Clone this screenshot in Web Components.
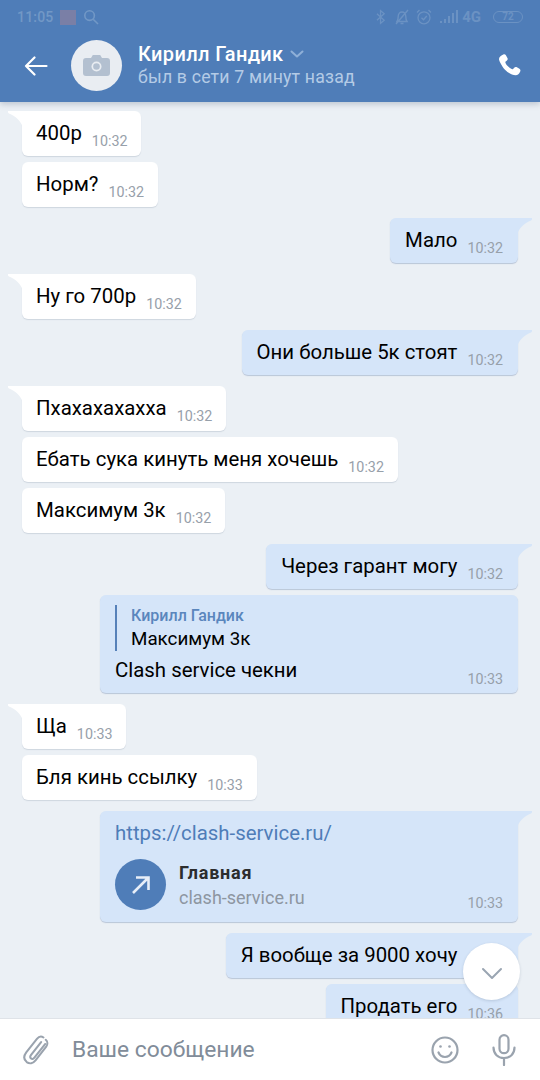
<!DOCTYPE html>
<html lang="ru">
<head>
<meta charset="utf-8">
<title>Чат</title>
<style>
	html, body { margin: 0; padding: 0; }
	body { width: 540px; height: 1080px; overflow: hidden; font-family: Roboto, "Noto Sans", sans-serif; background: #ebf0f5; }
</style>
</head>
<body>
<chat-screen>
	<chat-header slot="header" name="Кирилл Гандик" status="был в сети 7 минут назад"></chat-header>

	<chat-bubble first start time="10:32">400р</chat-bubble>
	<chat-bubble time="10:32">Норм?</chat-bubble>

	<chat-bubble first out time="10:32">Мало</chat-bubble>

	<chat-bubble first time="10:32">Ну го 700р</chat-bubble>

	<chat-bubble first out time="10:32">Они больше 5к стоят</chat-bubble>

	<chat-bubble first time="10:32">Пхахахахахха</chat-bubble>
	<chat-bubble time="10:32">Ебать сука кинуть меня хочешь</chat-bubble>
	<chat-bubble time="10:32">Максимум 3к</chat-bubble>

	<chat-bubble first out time="10:32">Через гарант могу</chat-bubble>
	<chat-bubble out wide quoted time="10:33">
		<reply-quote slot="top" author="Кирилл Гандик">Максимум 3к</reply-quote>
		Clash service чекни
	</chat-bubble>

	<chat-bubble first time="10:33">Ща</chat-bubble>
	<chat-bubble time="10:33">Бля кинь ссылку</chat-bubble>

	<chat-bubble first out wide embed time="10:33">
		<link-card slot="top" url="https://clash-service.ru/" title="Главная" domain="clash-service.ru"></link-card>
	</chat-bubble>
	<chat-bubble first out time="10:35">Я вообще за 9000 хочу</chat-bubble>
	<chat-bubble out time="10:36">Продать его</chat-bubble>

	<scroll-down slot="overlay"></scroll-down>
	<chat-composer slot="composer" placeholder="Ваше сообщение"></chat-composer>
</chat-screen>

<script>
class ChatScreen extends HTMLElement {
	constructor() {
		super();
		this.attachShadow({ mode: "open" });
		this.shadowRoot.innerHTML = `
      <style>
        :host {
          display: flex;
          flex-direction: column;
          width: 540px;
          height: 1080px;
          position: relative;
          overflow: hidden;
          background: #ebf0f5;
        }
        .messages {
          flex: 1;
          min-height: 0;
          overflow: hidden;
          display: flex;
          flex-direction: column;
        }
      </style>
      <slot name="header"></slot>
      <div class="messages"><slot></slot></div>
      <slot name="overlay"></slot>
      <slot name="composer"></slot>
    `;
	}
}

class ChatHeader extends HTMLElement {
	constructor() {
		super();
		this.attachShadow({ mode: "open" });
		this.shadowRoot.innerHTML = `
      <style>
        :host {
          display: block;
          flex: none;
          height: 102px;
          position: relative;
          z-index: 2;
          background: #4f7db8;
          box-shadow: 0 2px 6px rgba(60, 80, 110, 0.28);
          color: #fff;
        }
        .status {
          height: 34px;
          display: flex;
          align-items: center;
          padding: 0 17px;
          font-size: 14px;
          font-weight: 500;
          color: #7298c6;
        }
        .status .time { letter-spacing: 0.2px; }
        .status .thumb { width: 16px; height: 15px; margin-left: 6px; background: #7a7fa6; }
        .status svg { display: block; }
        .status .search { margin-left: 7px; }
        .status .right { margin-left: auto; display: flex; align-items: center; color: #6b92c3; }
        .status .bell { margin-left: 8px; }
        .status .alarm { margin-left: 6px; }
        .status .signal { margin-left: 8px; }
        .status .net { font-size: 15px; font-weight: 700; margin-left: 3px; }
        .status .batt {
          width: 28px; height: 10px; line-height: 10px; margin-left: 12px;
          border: 1.5px solid #6b92c3; border-radius: 7px;
          font-size: 10px; font-weight: 700; text-align: center;
        }
        .bar {
          height: 63px;
          padding-bottom: 5px;
          display: flex;
          align-items: center;
          padding-left: 24px;
          padding-right: 19px;
        }
        .avatar {
          width: 51px;
          height: 51px;
          margin-left: 23px;
          border-radius: 50%;
          background: #e9edf2;
          display: flex;
          align-items: center;
          justify-content: center;
          flex: none;
        }
        .who { margin-left: 16px; margin-top: -1px; }
        .name {
          display: flex;
          align-items: center;
          font-size: 20px;
          line-height: 24px;
          font-weight: 500;
          letter-spacing: 0.35px;
        }
        .name svg { margin-left: 7px; }
        .sub { font-size: 17.7px; line-height: 23px; color: #b4cbe6; letter-spacing: 0.18px; }
        .call { margin-left: auto; }
      </style>
      <div class="status">
        <span class="time">11:05</span>
        <span class="thumb"></span>
        <svg class="search" width="16" height="16" viewBox="0 0 16 16" fill="none" stroke="#7298c6" stroke-width="1.6">
          <circle cx="6.6" cy="6.6" r="4.8"/><path d="M10.2 10.2 15 15"/>
        </svg>
        <span class="right">
          <svg width="10" height="16" viewBox="0 0 11 16" fill="none" stroke="#6b92c3" stroke-width="1.4"><path d="M1 4.5 9 11.5 5 15V1L9 4.5 1 11.5"/></svg>
          <svg class="bell" width="16" height="16" viewBox="0 0 16 16" fill="none" stroke="#6b92c3" stroke-width="1.4"><path d="M3 12.5c1-1.5 1.2-3 1.2-5C4.200 4.800 6 3 8 3s3.800 1.800 3.800 4.500c0 2 .2 3.500 1.200 5zM6.500 14.500h3M2 15 14 1"/></svg>
          <svg class="alarm" width="16" height="16" viewBox="0 0 16 16" fill="none" stroke="#6b92c3" stroke-width="1.3"><circle cx="8" cy="8.800" r="6"/><path d="M5.500 8.800 7.500 10.800 10.800 7M1 3.500 3.500 1M15 3.500 12.500 1"/></svg>
          <svg class="signal" width="19" height="14" viewBox="0 0 19 14" fill="#6b92c3"><rect x="0" y="11" width="2" height="2"/><rect x="4" y="9" width="2" height="4"/><rect x="8" y="6" width="2" height="7"/><rect x="12" y="3" width="2" height="10"/><rect x="16" y="0" width="2" height="13"/></svg>
          <span class="net">4G</span>
          <span class="batt">72</span>
        </span>
      </div>
      <div class="bar">
        <svg width="24" height="20" viewBox="0 0 24 20" fill="none" stroke="#fff" stroke-width="2.200" stroke-linecap="round" stroke-linejoin="round">
          <path d="M22.500 10H2M10.500 1.500 2 10l8.500 8.500"/>
        </svg>
        <div class="avatar">
          <svg width="27" height="21" viewBox="0 0 27 21">
            <path fill="#b3c0d0" d="M3 3h5l1.800-3h7.400L19 3h5a3 3 0 0 1 3 3v12a3 3 0 0 1-3 3H3a3 3 0 0 1-3-3V6a3 3 0 0 1 3-3z"/>
            <circle cx="13.500" cy="11.500" r="5" fill="#e9edf2"/>
            <circle cx="13.500" cy="11.500" r="3.300" fill="#b3c0d0"/>
          </svg>
        </div>
        <div class="who">
          <div class="name"><span></span>
            <svg width="14" height="8" viewBox="0 0 14 8" fill="none" stroke="#8fb0d8" stroke-width="2" stroke-linecap="round" stroke-linejoin="round"><path d="M1.500 1.500 7 6.500l5.500-5"/></svg>
          </div>
          <div class="sub"></div>
        </div>
        <svg class="call" width="23" height="23" viewBox="0 0 23 23" fill="#fff">
          <path d="M5.300.6c1.100-.6 2-.2 2.600.7l1.500 2.600c.6 1 .3 1.900-.4 2.600L7.700 7.500c-.4.400-.4.900-.2 1.400.6 1.300 1.500 2.500 2.700 3.700 1.100 1.100 2.300 1.900 3.500 2.500.5.200 1 .2 1.400-.2l1.100-1.200c.8-.8 1.700-1 2.700-.4l2.500 1.500c1 .6 1.300 1.500.8 2.600-.8 2-2.500 3.900-4.600 3.900-3.200 0-7.300-2.200-10.600-5.500C3.200 11 1 6.800 1 4.900 1 3.200 3.500 1.400 5.300.6z"/>
        </svg>
      </div>
    `;
		this.shadowRoot.querySelector(".name span").textContent = this.getAttribute("name");
		this.shadowRoot.querySelector(".sub").textContent = this.getAttribute("status");
	}
}

class ChatBubble extends HTMLElement {
	constructor() {
		super();
		this.attachShadow({ mode: "open" });
		this.shadowRoot.innerHTML = `
      <style>
        :host {
          display: flex;
          flex: none;
          justify-content: flex-start;
          padding: 0 22px;
          margin-top: 6px;
        }
        :host([first]) { margin-top: 11px; }
        :host([start]) { margin-top: 9px; }
        :host([out]) { justify-content: flex-end; }
        .box {
          position: relative;
          background: #fff;
          border-radius: 6px;
          box-shadow: 0 1px 1px rgba(80, 100, 130, 0.18);
          padding: 10px 14px 10px 14px;
          color: #000;
          font-size: 20.4px;
          line-height: 25px;
        }
        :host([out]) .box { background: #d5e5f9; box-shadow: 0 1px 1px rgba(70, 100, 150, 0.3); padding-left: 15px; padding-right: 15px; }
        :host([first]) .box { border-top-left-radius: 0; }
        :host([first][out]) .box { border-top-left-radius: 6px; border-top-right-radius: 0; }
        :host([wide]) .box { width: 418px; box-sizing: border-box; }
        :host([embed]) .box { padding-bottom: 12px; }
        :host([embed]) .row { margin-top: -16px; }
        .row { display: flex; align-items: flex-end; justify-content: space-between; }
        .time {
          margin-left: 10px;
          font-size: 14.3px;
          line-height: 16px;
          color: #97a0aa;
          position: relative;
          top: 3px;
          flex: none;
        }
        :host([quoted]) .time { top: 4px; }
        :host([embed]) .time { top: 1px; }
        .tail { display: none; position: absolute; top: 0; left: -14px; }
        :host([first]) .tail { display: block; }
        :host([out]) .tail { left: auto; right: -14px; transform: scaleX(-1); }
        :host([out]) .tail path { fill: #d5e5f9; }
      </style>
      <div class="box">
        <svg class="tail" width="15" height="17" viewBox="0 0 15 17"><path fill="#fff" d="M0 0h15v17C13.500 10 7 5 1 2.500 0 2 -.3 .7 0 0z"/></svg>
        <slot name="top"></slot>
        <div class="row"><span><slot></slot></span><span class="time"></span></div>
      </div>
    `;
		this.shadowRoot.querySelector(".time").textContent = this.getAttribute("time");
	}
}

class ReplyQuote extends HTMLElement {
	constructor() {
		super();
		this.attachShadow({ mode: "open" });
		this.shadowRoot.innerHTML = `
      <style>
        :host {
          display: block;
          border-left: 2px solid #5681b9;
          padding-left: 14px;
          margin-bottom: 7px;
        }
        .author { font-size: 16px; font-weight: 500; line-height: 22px; color: #5a86bd; }
        .text { font-size: 18.8px; line-height: 24px; color: #000; }
      </style>
      <div class="author"></div>
      <div class="text"><slot></slot></div>
    `;
		this.shadowRoot.querySelector(".author").textContent = this.getAttribute("author");
	}
}

class LinkCard extends HTMLElement {
	constructor() {
		super();
		this.attachShadow({ mode: "open" });
		this.shadowRoot.innerHTML = `
      <style>
        :host { display: block; }
        .url { font-size: 20.4px; line-height: 25px; color: #4f7db8; }
        .card { display: flex; align-items: center; margin-top: 13px; height: 51px; }
        .icon {
          width: 51px; height: 51px; flex: none;
          border-radius: 50%;
          background: #4f7db8;
          display: flex; align-items: center; justify-content: center;
        }
        .info { margin-left: 13px; }
        .title { font-size: 18px; line-height: 25px; font-weight: 700; letter-spacing: 0.8px; color: #2c2d2e; }
        .domain { font-size: 18px; line-height: 25px; color: #8d96a1; }
      </style>
      <div class="url"></div>
      <div class="card">
        <div class="icon">
          <svg width="20" height="20" viewBox="0 0 20 20" fill="none" stroke="#e7eef8" stroke-width="2.600">
            <path d="M2 18 17 3M5 2.500h12.500V15"/>
          </svg>
        </div>
        <div class="info"><div class="title"></div><div class="domain"></div></div>
      </div>
    `;
		this.shadowRoot.querySelector(".url").textContent = this.getAttribute("url");
		this.shadowRoot.querySelector(".title").textContent = this.getAttribute("title");
		this.shadowRoot.querySelector(".domain").textContent = this.getAttribute("domain");
	}
}

class ScrollDown extends HTMLElement {
	constructor() {
		super();
		this.attachShadow({ mode: "open" });
		this.shadowRoot.innerHTML = `
      <style>
        :host {
          position: absolute;
          left: 463px;
          top: 943px;
          width: 57px;
          height: 57px;
          border-radius: 50%;
          background: #fff;
          box-shadow: 0 1px 3px rgba(60, 80, 110, 0.2);
          display: flex;
          align-items: center;
          justify-content: center;
          z-index: 1;
        }
        svg { margin-top: 3px; }
      </style>
      <svg width="22" height="13" viewBox="0 0 22 13" fill="none" stroke="#9aa5b2" stroke-width="2" stroke-linecap="round" stroke-linejoin="round">
        <path d="M2 2l9 9 9-9"/>
      </svg>
    `;
	}
}

class ChatComposer extends HTMLElement {
	constructor() {
		super();
		this.attachShadow({ mode: "open" });
		this.shadowRoot.innerHTML = `
      <style>
        :host {
          display: flex;
          flex: none;
          align-items: center;
          height: 61px;
          background: #fff;
          border-top: 1px solid #dfe3e8;
          position: relative;
          z-index: 2;
        }
        .clip { margin-left: 23px; flex: none; }
        .ph { margin-left: 23px; font-size: 22.8px; color: #818c99; }
        .smile { margin-left: auto; flex: none; }
        .mic { margin-left: 33px; margin-right: 24px; flex: none; }
      </style>
      <svg class="clip" width="26" height="30" viewBox="0 0 28 32" fill="none" stroke="#9aa3ae" stroke-width="2.200" stroke-linecap="round">
        <path d="M22 2.500C19.800 .8 17 1.500 15 4L3.500 18.500C0.500 22.500 1 26.500 4 29c3 2.200 6.800 1.600 9.500-1.800L25 12.500c1.800-2.500 1.600-5.800-.5-7.500M19.500 7.500 8.500 21.500c-1 1.400-.9 2.700.2 3.600 1.100.9 2.500.6 3.600-.8L24 9.500"/>
      </svg>
      <span class="ph"></span>
      <svg class="smile" width="28" height="28" viewBox="0 0 28 28" fill="none" stroke="#9aa3ae" stroke-width="2.200" stroke-linecap="round">
        <circle cx="14" cy="14" r="12.500"/>
        <path d="M7.500 16.500c1.300 3 3.600 4.500 6.500 4.500s5.200-1.500 6.500-4.500"/>
        <circle cx="9.500" cy="10.500" r="1.300" fill="#9aa3ae" stroke="none"/>
        <circle cx="18.500" cy="10.500" r="1.300" fill="#9aa3ae" stroke="none"/>
      </svg>
      <svg class="mic" width="24" height="32" viewBox="0 0 24 32" fill="none" stroke="#9aa3ae" stroke-width="2.200" stroke-linecap="round">
        <rect x="7.500" y="1.200" width="9" height="18" rx="4.500"/>
        <path d="M1.500 13.500c0 6.500 4.500 10.500 10.500 10.500s10.500-4 10.500-10.500M12 24v7"/>
      </svg>
    `;
		this.shadowRoot.querySelector(".ph").textContent = this.getAttribute("placeholder");
	}
}

customElements.define("chat-screen", ChatScreen);
customElements.define("chat-header", ChatHeader);
customElements.define("chat-bubble", ChatBubble);
customElements.define("reply-quote", ReplyQuote);
customElements.define("link-card", LinkCard);
customElements.define("scroll-down", ScrollDown);
customElements.define("chat-composer", ChatComposer);
</script>
</body>
</html>
